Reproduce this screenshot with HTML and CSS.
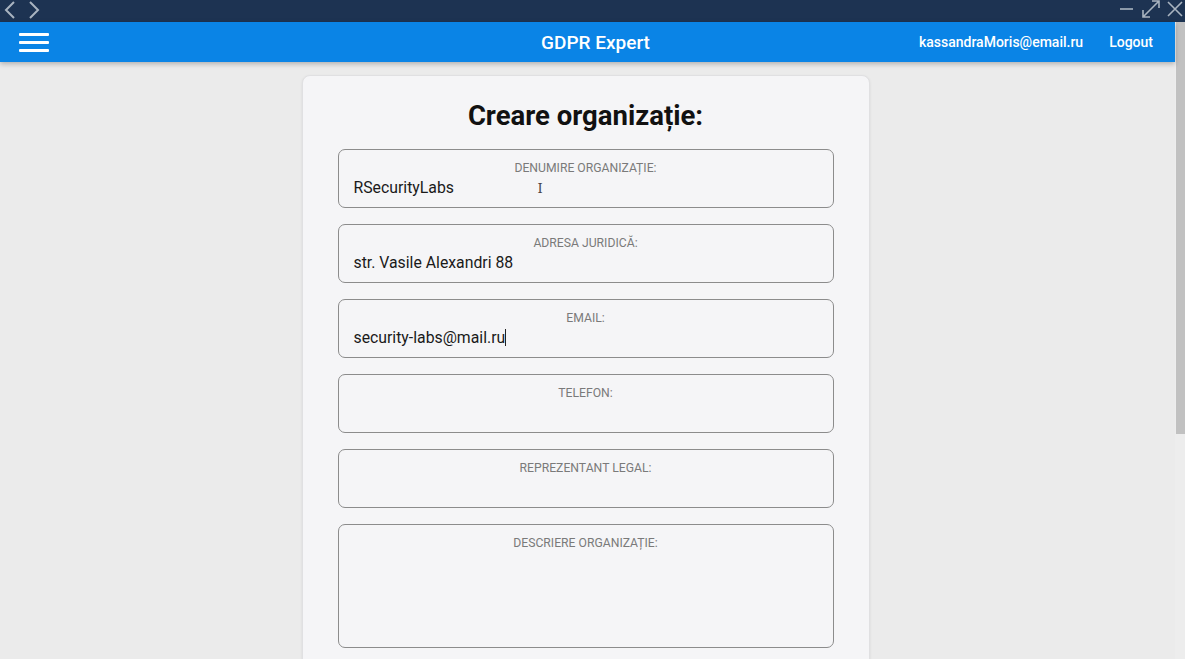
FILE: index.html
```html
<!DOCTYPE html>
<html lang="ro">
<head>
<meta charset="utf-8">
<title>GDPR Expert</title>
<link rel="stylesheet" href="styles.css">
</head>
<body>
<div class="titlebar">
  <div class="nav">
    <svg class="tb-icon" width="14" height="20" viewBox="0 0 14 20"><path d="M11 2 L3 10 L11 18" fill="none" stroke="#a9b4c0" stroke-width="2"/></svg>
    <svg class="tb-icon" width="14" height="20" viewBox="0 0 14 20"><path d="M3 2 L11 10 L3 18" fill="none" stroke="#a9b4c0" stroke-width="2"/></svg>
  </div>
  <div class="win">
    <svg width="16" height="18" viewBox="0 0 16 18"><path d="M1 9 H14" stroke="#a9b4c0" stroke-width="1.6"/></svg>
    <svg width="20" height="20" viewBox="0 0 20 20"><path d="M2 18 L18 2 M11 2 H18 V9 M2 11 V18 H9" fill="none" stroke="#a9b4c0" stroke-width="1.6"/></svg>
    <svg width="16" height="18" viewBox="0 0 16 18"><path d="M1 2 L15 16 M15 2 L1 16" stroke="#a9b4c0" stroke-width="1.6"/></svg>
  </div>
</div>
<div class="frame">
  <div class="app">
    <header class="appbar">
      <div class="burger"><span></span><span></span><span></span></div>
      <div class="brand">GDPR Expert</div>
      <div class="user">
        <span>kassandraMoris@email.ru</span>
        <span>Logout</span>
      </div>
    </header>
    <main class="content">
      <section class="card">
        <h1 class="heading">Creare organizație:</h1>
        <div class="field">
          <div class="label">Denumire organizație:</div>
          <div class="value">RSecurityLabs<span class="ibeam">I</span></div>
        </div>
        <div class="field">
          <div class="label">Adresa juridică:</div>
          <div class="value">str. Vasile Alexandri 88</div>
        </div>
        <div class="field">
          <div class="label">Email:</div>
          <div class="value">security-labs@mail.ru<span class="caret"></span></div>
        </div>
        <div class="field">
          <div class="label">Telefon:</div>
          <div class="value"></div>
        </div>
        <div class="field">
          <div class="label">Reprezentant legal:</div>
          <div class="value"></div>
        </div>
        <div class="field field-tall">
          <div class="label">Descriere organizație:</div>
          <div class="value"></div>
        </div>
      </section>
    </main>
  </div>
  <div class="scrollbar"><div class="thumb"></div></div>
</div>
</body>
</html>
```

FILE: styles.css
```css
* { box-sizing: border-box; }
html, body { margin: 0; padding: 0; height: 100%; overflow: hidden; }
body {
  font-family: Roboto, "Liberation Sans", sans-serif;
  background: #ebebeb;
  display: flex;
  flex-direction: column;
}
.titlebar {
  height: 22px;
  background: #1d3352;
  display: flex;
  justify-content: space-between;
  align-items: center;
  flex-shrink: 0;
}
.nav { display: flex; gap: 10px; padding-left: 3px; margin-top: -3px; }
.win { display: flex; align-items: center; gap: 6px; padding-right: 2px; margin-top: -4px; }
.frame {
  flex: 1;
  display: flex;
  min-height: 0;
}
.app {
  flex: 1;
  display: flex;
  flex-direction: column;
  min-width: 0;
}
.appbar {
  height: 40px;
  background: #0a84e6;
  color: #fff;
  display: flex;
  align-items: center;
  position: relative;
  box-shadow: 0 2px 5px rgba(0,0,0,0.25);
  z-index: 2;
  flex-shrink: 0;
}
.burger {
  width: 30px;
  margin-left: 19px;
  display: flex;
  flex-direction: column;
  gap: 5px;
}
.burger span { display: block; height: 3px; background: #fff; border-radius: 1px; }
.brand {
  position: absolute;
  left: 16px; right: 0;
  text-align: center;
  font-size: 19px;
  font-weight: 500;
  pointer-events: none;
  top: 9px;
}
.user {
  margin-left: auto;
  display: flex;
  gap: 26px;
  font-size: 14px;
  font-weight: 500;
  padding-right: 22px;
  position: relative;
}
.content {
  flex: 1;
  display: flex;
  justify-content: center;
  padding-top: 13px;
  overflow: hidden;
}
.card {
  width: 568px;
  margin-right: 4px;
  background: #f5f5f7;
  border-radius: 8px;
  border: 1px solid #e0e0e2;
  box-shadow: 0 1px 3px rgba(0,0,0,0.08);
  padding: 0 35px 40px;
  display: flex;
  flex-direction: column;
  gap: 16px;
  align-self: flex-start;
}
.heading {
  margin: 23px 0 0;
  text-align: center;
  font-size: 27.5px;
  font-weight: 700;
  color: #111;
  line-height: 34px;
}
.field {
  height: 59px;
  border: 1px solid #8c8c8c;
  border-radius: 7px;
  padding: 11px 15px 0;
  position: relative;
}
.field-tall { height: 124px; }
.label {
  text-align: center;
  font-size: 12.2px;
  text-transform: uppercase;
  color: #7a7a7a;
  line-height: 14px;
}
.value {
  font-size: 15.8px;
  color: #1a1a1a;
  line-height: 20px;
  margin-top: 3px;
  position: relative;
  height: 20px;
}
.ibeam {
  position: absolute;
  left: 184px;
  top: 1px;
  font-family: "DejaVu Serif", serif;
  font-size: 13px;
  color: #444;
}
.caret {
  display: inline-block;
  width: 1px;
  height: 17px;
  background: #222;
  vertical-align: -3px;
}
.scrollbar {
  width: 10px;
  background: #ededed;
  flex-shrink: 0;
}
.thumb {
  height: 412px;
  background: #c1c1c1;
  margin-left: 1px;
}
```
